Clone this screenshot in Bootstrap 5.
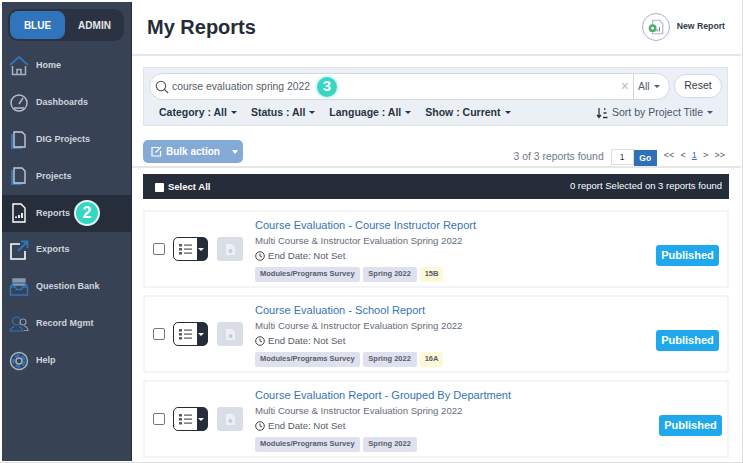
<!DOCTYPE html>
<html><head><meta charset="utf-8">
<link href="https://cdn.jsdelivr.net/npm/bootstrap@5.3.0/dist/css/bootstrap.min.css" rel="stylesheet">
<style>
html,body{margin:0;width:743px;height:463px;overflow:hidden;background:#fff;font-family:"Liberation Sans",Arial,sans-serif}
.shell{width:743px;height:463px;padding:2px 1px 2px 2px;border-right:1px solid #ddd;border-bottom:1px solid #ddd}
.shell-in{height:459px}
.sidebar{width:130px;flex:none;background:#374254;border-right:1px solid #262e3c}
.tog{margin:7px 7px 6.3px 6px;height:32px;background:#2b3342;border-radius:10px;padding:2px}
.tog span{flex:1;display:flex;align-items:center;justify-content:center;font-size:10px;font-weight:700;color:#e3e7ec;border-radius:8px}
.tog .on{background:#2f74bd;color:#fff;flex:none;width:55px}
.tog .off{margin-left:2px}
.nav-it{height:36.9px;display:flex;align-items:center;padding-left:7px;color:#cfd5dd;font-size:9px;font-weight:700;gap:7px;position:relative}
.nav-it svg{width:20px;height:22px;flex:none}
.nav-it.act{background:#272e3b}
.num{width:26px;height:26px;border-radius:50%;background:#35d6c4;color:#fff;font-weight:700;font-size:16px;display:flex;align-items:center;justify-content:center;border:2px solid #dff8f5}
.nav-it .num{margin-left:-3px}
.main{min-width:0;flex:1;background:#fff}
.head{height:54px;border-bottom:2px solid #e4e6e8;padding:0 16px 2px 15px}
.head h1{font-size:20px;font-weight:700;color:#252c38;margin:0}
.nr{font-size:8.7px;font-weight:700;color:#2f3a4a;gap:7px}
.nr-c{width:28px;height:28px;border:1px solid #a9b4c4;border-radius:50%}
.fil{margin:11px 13px 0 11px;height:59px;background:#ebf0f7;border:1px solid #dfe4ea;padding:5px 5px 0 5px}
.srch{flex:1;height:27px;background:#fff;border:1px solid #d5d9df;border-radius:14px;font-size:10.35px;color:#555d68;padding-left:5px;position:relative}
.srch .txt{margin-left:3px}
.srch .num{width:24px;height:24px;margin-left:5px;font-size:15px}
.x{color:#bbb;font-size:14px;margin-right:4px;margin-left:auto}
.all{border-left:1px solid #d5d9df;height:100%;width:36px;padding-left:4px;font-size:10.5px;gap:4px}
.tri{display:inline-block;border-left:3px solid transparent;border-right:3px solid transparent;border-top:3px solid currentColor;margin-left:4px;vertical-align:2px}
.rst{width:48px;height:24px;background:#fff;border:1px solid #d5d9df;border-radius:12px;font-size:10.5px;color:#333b47;margin-left:4px;margin-top:1px;display:flex;align-items:center;justify-content:center}
.flt{font-size:10.5px;font-weight:700;color:#2b3340;gap:14px;padding:5px 9px 0 10px;line-height:14px}
.flt .srt{font-weight:400;color:#4d5561;margin-left:auto}
.bar2{margin:14px 16px 0 11px;height:29px;align-items:flex-start}
.bulk{width:100px;height:23px;background:#85aad6;border-radius:5px;color:#fff;font-size:10px;font-weight:700;padding-left:8px;gap:4px}
.found{font-size:10.4px;color:#6e7885;margin-top:9px;gap:7px}
.gof{width:23px;height:16px;border:1px solid #ddd;font-size:8.5px;color:#333;display:flex;align-items:center;justify-content:center;margin-right:-7px}
.gob{width:23px;height:16px;background:#2f70b8;color:#fff;font-size:8.5px;font-weight:700;display:flex;align-items:center;justify-content:center;margin-top:1px}
.pg{font-size:9px;color:#556;gap:6.2px}
.pg u{color:#2f70b8}
.line{border-top:2px solid #e4e6e8;margin-top:-3px}
.dark{margin:6px 12px 0 11px;height:25px;background:#252c3a;color:#fff;font-size:9.5px;font-weight:700;padding:0 7px 0 12px}
.dark .sel{padding-top:2px}
.dark .cnt{font-weight:400;font-size:9.5px}
.wbox{width:9px;height:9px;background:#fff;border-radius:1px;margin-right:4px}
.gapr{height:11px}
.rep{margin:0 12px 7px 11px;height:78px;border:2px solid #f3f4f5;padding:0 8px;position:relative}
.cb{width:12px;height:12px;border:1px solid #767676;border-radius:2px;flex:none}
.act-b{width:35px;height:24px;margin-left:8px;border:1px solid #252c3a;border-radius:5px;background:linear-gradient(90deg,#fff 0 23px,#252c3a 23px);flex:none;padding-left:5px}
.act-b i{display:inline-block;margin-left:6px;border-left:3px solid transparent;border-right:3px solid transparent;border-top:3px solid #fff}
.doc{width:26px;height:24px;margin-left:9px;background:#d8dde6;border-radius:3px;flex:none}
.info{margin-left:12px;flex:1;margin-top:1px}
.ttl{font-size:11.05px;color:#3674b5;line-height:14px}
.sub{font-size:9.6px;color:#656d78;line-height:14px;margin-top:2px}
.end{font-size:9.6px;color:#555d68;line-height:14px;margin-top:1px;gap:3px}
.tags{gap:3px;margin-top:4px}
.tg{background:#dfe2ee;color:#565d6b;font-size:7.5px;font-weight:700;height:15px;padding:0 5px;border-radius:2px;display:flex;align-items:center}
.tg.w{width:54px;justify-content:center;padding:0}
.tg.y{background:#fdf8d8}
.pub{background:#1fa9ec;color:#fff;font-size:11px;font-weight:700;width:63px;height:21px;border-radius:3px;display:flex;align-items:center;justify-content:center;flex:none;margin-top:12px}
.rep3 .pub{position:relative;left:3px}
</style></head><body>
<svg width="0" height="0" class="position-absolute"><defs>
<g id="lst" fill="#555"><rect x="0" y="0" width="3" height="2.500" rx=".5"/><rect x="0" y="4" width="3" height="2.500" rx=".5"/><rect x="0" y="8" width="3" height="2.500" rx=".5"/><rect x="5" y=".5" width="8" height="1.200"/><rect x="5" y="4.500" width="8" height="1.200"/><rect x="5" y="8.500" width="8" height="1.200"/></g>
<g id="dc"><path d="M1 1h6l3 3v8H1z" fill="#eef0f4"/><circle cx="5.500" cy="8" r="2" fill="#c6ccd8"/></g>
<g id="clk" fill="none" stroke="#444"><circle cx="5" cy="5" r="4.300"/><path d="M5 2.500V5l2 1"/></g>
</defs></svg>
<div class="shell"><div class="shell-in d-flex">
<aside class="sidebar">
<div class="tog d-flex"><span class="on">BLUE</span><span class="off">ADMIN</span></div>
<div class="nav-it"><svg viewBox="0 0 20 22" fill="none" stroke="#a8b3c2" stroke-width="1.5"><path d="M1 10 10 2l9 8" stroke="#2f74bd" stroke-width="1.8"/><path d="M3.500 11v8.500h13V11M8 19.500v-5h4v5"/></svg>Home</div>
<div class="nav-it"><svg viewBox="0 0 20 22" fill="none" stroke="#b6bfcb" stroke-width="1.4"><circle cx="10" cy="11" r="8"/><path d="M10 12 14 6M5 16h10"/></svg>Dashboards</div>
<div class="nav-it"><svg viewBox="0 0 20 22" fill="none" stroke-width="1.4"><path d="M3 5v14h10" stroke="#2f74bd" stroke-width="2"/><path d="M5 3h8l3 3v12H5z" stroke="#c3cbd5" fill="#374254"/></svg>DIG Projects</div>
<div class="nav-it"><svg viewBox="0 0 20 22" fill="none" stroke-width="1.4"><path d="M3 5v14h10" stroke="#2f74bd" stroke-width="2"/><path d="M5 3h8l3 3v12H5z" stroke="#c3cbd5" fill="#374254"/></svg>Projects</div>
<div class="nav-it act"><svg viewBox="0 0 20 22" fill="none" stroke="#fff" stroke-width="1.4"><path d="M4 2h8l4 4v14H4z"/><path d="M7 16v-1.500M10 16v-3M13 16v-5" stroke-width="1.800"/></svg>Reports<span class="num">2</span></div>
<div class="nav-it"><svg viewBox="0 0 20 22" fill="none" stroke-width="1.600"><path d="M11 5H2v15h14v-8" stroke="#fff"/><path d="M9 12 18 3M12 2.500h6.500V9" stroke="#2f74bd" stroke-width="1.800"/></svg>Exports</div>
<div class="nav-it"><svg viewBox="0 0 20 22" fill="none" stroke-width="1.300"><path d="M4 3h12v3H4zM4 6h12v3H4z" stroke="#8e99a8" fill="#8e99a8"/><path d="M1.500 11 4 7h12l2.500 4v8h-17zM1.500 11h5l1 2.500h5l1-2.500h5" stroke="#2f74bd" stroke-width="1.500"/></svg>Question Bank</div>
<div class="nav-it"><svg viewBox="0 0 20 22" fill="none" stroke="#2f74bd" stroke-width="1.200"><circle cx="7.500" cy="8" r="4"/><path d="M1 18c0-3 3-3.500 4-4.500M10 13.500c1 1 4 1.500 4 4.500H1"/><circle cx="14" cy="9" r="3" stroke="#8e99a8"/><path d="M15 13c2 .5 4 1.500 4 4.500h-4" stroke="#8e99a8"/></svg>Record Mgmt</div>
<div class="nav-it"><svg viewBox="0 0 20 22" fill="none" stroke="#a8b3c2" stroke-width="1.500"><circle cx="10" cy="11" r="8.500"/><circle cx="10" cy="11" r="5.500" stroke="#2f74bd" stroke-width="2.500" stroke-dasharray="5 2"/><circle cx="10" cy="11" r="3"/></svg>Help</div>
</aside>
<main class="main">
<div class="head d-flex align-items-center justify-content-between"><h1>My Reports</h1>
<div class="nr d-flex align-items-center"><span class="nr-c d-flex align-items-center justify-content-center"><svg width="18" height="18" viewBox="0 0 16 16" fill="none"><path d="M5 2h6l3 3v9H5z" stroke="#a9b4c4"/><circle cx="5" cy="9" r="3.500" fill="#4fae6a"/><circle cx="5" cy="9" r="1.200" fill="#fff"/><path d="M9 12v-2M11 12V8" stroke="#7b8798"/></svg></span>New Report</div></div>
<section class="fil">
<div class="d-flex">
<div class="srch d-flex align-items-center"><svg width="14" height="14" viewBox="0 0 14 14" fill="none" stroke="#555" stroke-width="1.100"><circle cx="6" cy="6" r="4.700"/><path d="m9.500 9.500 3.500 3.500"/></svg><span class="txt">course evaluation spring 2022</span><span class="num">3</span><span class="x">×</span><span class="all d-flex align-items-center">All<b class="tri m-0"></b></span></div>
<div class="rst">Reset</div></div>
<div class="flt d-flex"><span>Category : All<b class="tri"></b></span><span>Status : All<b class="tri"></b></span><span>Language : All<b class="tri"></b></span><span>Show : Current<b class="tri"></b></span>
<span class="srt"><svg width="12" height="12" viewBox="0 0 12 12" fill="none" stroke="#333" stroke-width="1.300" class="me-1"><path d="M3 1v9M1 8l2 2.500L5 8M8 2h1.500M7.500 6h3M7 10.500h4.500"/></svg>Sort by Project Title<b class="tri"></b></span></div>
</section>
<div class="bar2 d-flex justify-content-between">
<div class="bulk d-flex align-items-center"><svg width="11" height="11" viewBox="0 0 11 11" fill="none" stroke="#fff" stroke-width="1.200"><path d="M8 1.500H1v8.500h8.500V5M4.500 6.500 10 1"/></svg>Bulk action<b class="tri ms-2" style="border-width:4px 3.500px 0"></b></div>
<div class="found d-flex align-items-start"><span>3 of 3 reports found</span><span class="gof">1</span><span class="gob">Go</span><span class="pg d-flex"><span>&lt;&lt;</span><span>&lt;</span><u>1</u><span>&gt;</span><span>&gt;&gt;</span></span></div>
</div>
<div class="line"></div>
<div class="dark d-flex align-items-center justify-content-between"><span class="sel d-flex align-items-center"><span class="wbox"></span>Select All</span><span class="cnt">0 report Selected on 3 reports found</span></div>
<div class="gapr"></div>
<div class="rep d-flex align-items-center"><span class="cb"></span><span class="act-b d-flex align-items-center"><svg width="13" height="11" viewBox="0 0 13 11"><use href="#lst"/></svg><i></i></span><span class="doc d-flex align-items-center justify-content-center"><svg width="11" height="13" viewBox="0 0 11 13"><use href="#dc"/></svg></span>
<div class="info"><div class="ttl">Course Evaluation - Course Instructor Report</div><div class="sub">Multi Course &amp; Instructor Evaluation Spring 2022</div><div class="end d-flex align-items-center"><svg width="10" height="10" viewBox="0 0 10 10"><use href="#clk"/></svg>End Date: Not Set</div><div class="tags d-flex"><span class="tg">Modules/Programs Survey</span><span class="tg w">Spring 2022</span><span class="tg y">15B</span></div></div>
<span class="pub">Published</span></div>
<div class="rep d-flex align-items-center"><span class="cb"></span><span class="act-b d-flex align-items-center"><svg width="13" height="11" viewBox="0 0 13 11"><use href="#lst"/></svg><i></i></span><span class="doc d-flex align-items-center justify-content-center"><svg width="11" height="13" viewBox="0 0 11 13"><use href="#dc"/></svg></span>
<div class="info"><div class="ttl">Course Evaluation - School Report</div><div class="sub">Multi Course &amp; Instructor Evaluation Spring 2022</div><div class="end d-flex align-items-center"><svg width="10" height="10" viewBox="0 0 10 10"><use href="#clk"/></svg>End Date: Not Set</div><div class="tags d-flex"><span class="tg">Modules/Programs Survey</span><span class="tg w">Spring 2022</span><span class="tg y">16A</span></div></div>
<span class="pub">Published</span></div>
<div class="rep rep3 d-flex align-items-center"><span class="cb"></span><span class="act-b d-flex align-items-center"><svg width="13" height="11" viewBox="0 0 13 11"><use href="#lst"/></svg><i></i></span><span class="doc d-flex align-items-center justify-content-center"><svg width="11" height="13" viewBox="0 0 11 13"><use href="#dc"/></svg></span>
<div class="info"><div class="ttl">Course Evaluation Report - Grouped By Department</div><div class="sub">Multi Course &amp; Instructor Evaluation Spring 2022</div><div class="end d-flex align-items-center"><svg width="10" height="10" viewBox="0 0 10 10"><use href="#clk"/></svg>End Date: Not Set</div><div class="tags d-flex"><span class="tg">Modules/Programs Survey</span><span class="tg w">Spring 2022</span></div></div>
<span class="pub">Published</span></div>
</main></div></div>
<script src="https://cdn.jsdelivr.net/npm/bootstrap@5.3.0/dist/js/bootstrap.bundle.min.js"></script>
</body></html>
